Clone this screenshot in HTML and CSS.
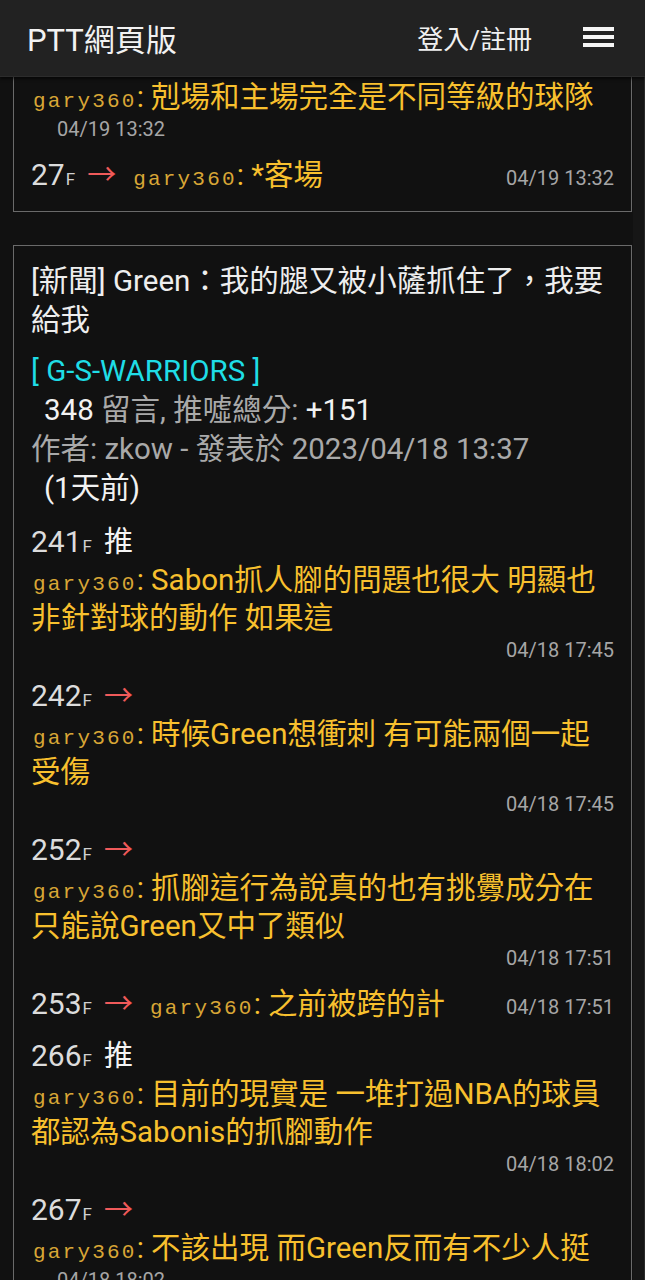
FILE: index.html
```html
<!DOCTYPE html>
<html lang="zh-Hant">
<head>
<meta charset="utf-8">
<title>PTT網頁版</title>
<link rel="stylesheet" href="styles.css">
</head>
<body>
<header class="topbar">
  <div class="brand">PTT網頁版</div>
  <div class="login">登入/註冊</div>
  <div class="menu" aria-label="menu"><span></span><span></span><span></span></div>
</header>
<div class="page">
  <main class="main">
    <section class="card card-cut">
      <div class="comment">
        <div class="row"><span class="user">gary360</span><span class="content">: 剋場和主場完全是不同等級的球隊</span></div>
        <div class="time-row indent"><span class="time">04/19 13:32</span></div>
      </div>
      <div class="comment">
        <div class="row"><span class="time right">04/19 13:32</span><span class="floor">27<small>F</small></span><span class="tag arrow">→</span><span class="user">gary360</span><span class="content">: *客場</span></div>
      </div>
    </section>

    <section class="card">
      <h2 class="title">[新聞] Green：我的腿又被小薩抓住了，我要給我</h2>
      <div class="board">[ G-S-WARRIORS ]</div>
      <div class="meta indent-meta"><span class="white">348</span> 留言, 推噓總分: <span class="white">+151</span></div>
      <div class="meta">作者: zkow - 發表於 2023/04/18 13:37</div>
      <div class="meta indent-meta white">(1天前)</div>

      <div class="comments">
        <div class="comment">
          <div class="row"><span class="floor">241<small>F</small></span><span class="tag push">推</span></div>
          <div class="row"><span class="user">gary360</span><span class="content">: Sabon抓人腳的問題也很大 明顯也非針對球的動作 如果這</span></div>
          <div class="time-row"><span class="time">04/18 17:45</span></div>
        </div>
        <div class="comment">
          <div class="row"><span class="floor">242<small>F</small></span><span class="tag arrow">→</span></div>
          <div class="row"><span class="user">gary360</span><span class="content">: 時候Green想衝刺 有可能兩個一起受傷</span></div>
          <div class="time-row"><span class="time">04/18 17:45</span></div>
        </div>
        <div class="comment">
          <div class="row"><span class="floor">252<small>F</small></span><span class="tag arrow">→</span></div>
          <div class="row"><span class="user">gary360</span><span class="content">: 抓腳這行為說真的也有挑釁成分在只能說Green又中了類似</span></div>
          <div class="time-row"><span class="time">04/18 17:51</span></div>
        </div>
        <div class="comment">
          <div class="row"><span class="time right">04/18 17:51</span><span class="floor">253<small>F</small></span><span class="tag arrow">→</span><span class="user">gary360</span><span class="content">: 之前被跨的計</span></div>
        </div>
        <div class="comment">
          <div class="row"><span class="floor">266<small>F</small></span><span class="tag push">推</span></div>
          <div class="row"><span class="user">gary360</span><span class="content">: 目前的現實是 一堆打過NBA的球員都認為Sabonis的抓腳動作</span></div>
          <div class="time-row"><span class="time">04/18 18:02</span></div>
        </div>
        <div class="comment">
          <div class="row"><span class="floor">267<small>F</small></span><span class="tag arrow">→</span></div>
          <div class="row"><span class="user">gary360</span><span class="content">: 不該出現 而Green反而有不少人挺</span></div>
          <div class="time-row indent"><span class="time">04/18 18:02</span></div>
        </div>
      </div>
    </section>
  </main>
  <div class="track"></div>
</div>
</body>
</html>
```

FILE: styles.css
```css
* { box-sizing: border-box; }
html, body { margin: 0; padding: 0; }
body {
  background: #111111;
  color: #dddddd;
  font-family: "Roboto", "Noto Sans CJK TC", sans-serif;
  width: 645px;
  height: 1280px;
  overflow: hidden;
}
.topbar {
  height: 77px;
  background: #222222;
  display: flex;
  align-items: center;
  padding: 0 31px 2px 27px;
  box-shadow: 0 2px 3px rgba(0,0,0,0.6);
  border-bottom: 1px solid #2c2c2c;
  position: relative;
  z-index: 2;
}
.brand {
  font-size: 31px;
  color: #f2f2f2;
}
.login {
  margin-left: auto;
  font-size: 26px;
  color: #f0f0f0;
}
.menu {
  margin-left: 51px;
  width: 31px;
  display: flex;
  flex-direction: column;
  gap: 4.5px;
}
.menu span {
  display: block;
  height: 3.5px;
  background: #f5f5f5;
}
.page {
  display: flex;
}
.main {
  flex: 1;
  background: #111111;
}
.track {
  width: 12px;
  background: #161616;
  border-right: 1px solid #2a2a2a;
  min-height: 1203px;
}
.card {
  margin: 0 1px 0 13px;
  border: 1px solid #6a6a6a;
  padding: 16px 17px 17px 17px;
  background: #111111;
}
.card-cut {
  border-top: none;
  padding-top: 1px;
  margin-bottom: 33px;
}
.title {
  margin: 0;
  font-weight: normal;
  font-size: 29.5px;
  line-height: 39px;
  color: #eeeeee;
}
.board {
  margin-top: 12px;
  font-size: 29.5px;
  line-height: 39px;
  color: #1fdde6;
}
.meta {
  font-size: 29.5px;
  line-height: 39px;
  color: #a9a9a9;
}
.indent-meta { padding-left: 13px; }
.white { color: #f2f2f2; }
.comments { margin-top: 15px; }
.comment { margin-bottom: 14px; }
.comment:last-child { margin-bottom: 0; }
.row {
  font-size: 29.5px;
  line-height: 38px;
}
.row > span { line-height: 1; }
.floor {
  font-size: 30px;
  color: #dcdcdc;
}
.floor small {
  font-size: 17px;
  color: #d0d0d0;
  margin-left: 1px;
}
.tag {
  font-family: "Noto Sans CJK TC", sans-serif;
  font-size: 29px;
  margin-left: 12px;
  margin-right: 15px;
}
.push { color: #f4f4f4; }
.arrow { color: #f05a5a; }
.user {
  font-family: "Liberation Mono", monospace;
  font-size: 21px;
  letter-spacing: 2.2px;
  color: #d8a636;
  margin-left: 2px;
}
.content {
  font-size: 29.5px;
  color: #f8c02e;
}
.time {
  font-size: 20px;
  color: #a6a6a6;
}
.row > .time.right {
  float: right;
  line-height: 38px;
  padding-top: 3px;
}
.time-row {
  height: 26px;
  line-height: 26px;
  display: flex;
  justify-content: flex-end;
}
.time-row.indent {
  justify-content: flex-start;
  padding-left: 26px;
}
```
